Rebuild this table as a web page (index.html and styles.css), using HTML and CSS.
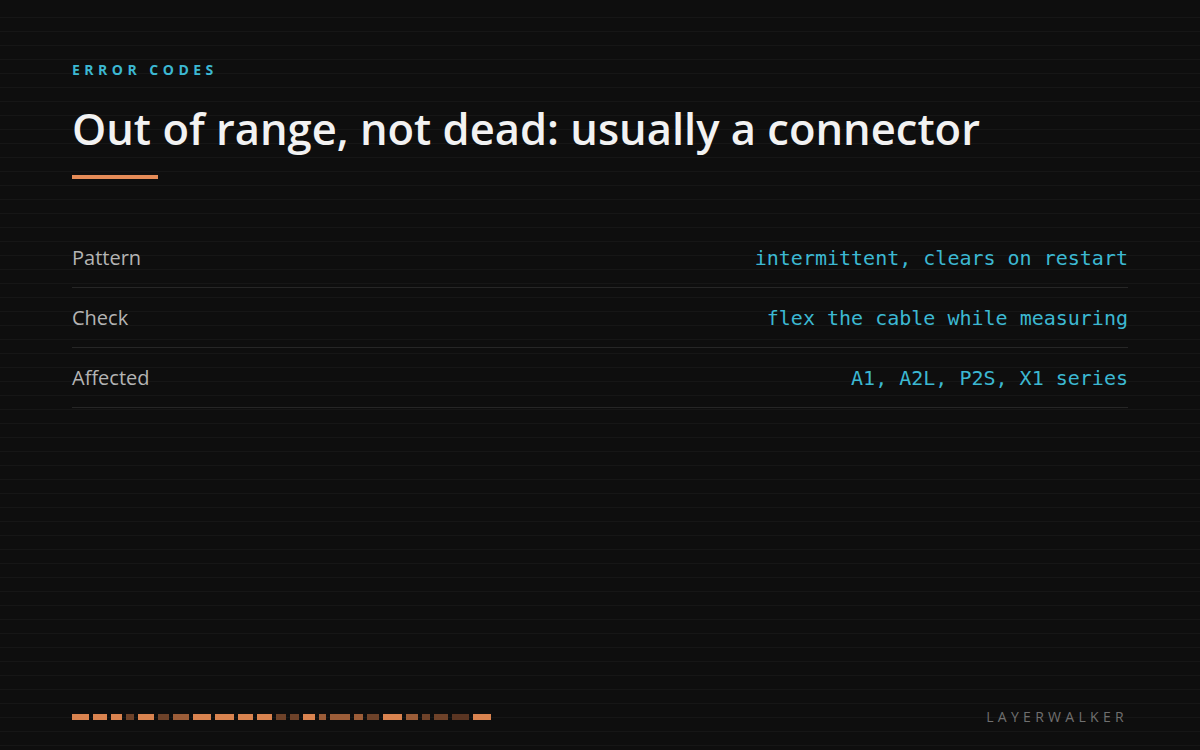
FILE: index.html
```html
<!DOCTYPE html>
<html lang="en">
<head>
<meta charset="UTF-8">
<title>Error codes</title>
<link rel="stylesheet" href="styles.css">
</head>
<body>
<div class="slide">
	<div class="top">
		<p class="eyebrow">ERROR CODES</p>
		<h1 class="title">Out of range, not dead: usually a connector</h1>
		<div class="rule"></div>
		<ul class="facts">
			<li><span class="key">Pattern</span><span class="val">intermittent, clears on restart</span></li>
			<li><span class="key">Check</span><span class="val">flex the cable while measuring</span></li>
			<li><span class="key">Affected</span><span class="val">A1, A2L, P2S, X1 series</span></li>
		</ul>
	</div>
	<div class="foot">
		<div class="dashes">
			<i style="width:17px"></i>
			<i style="width:14px"></i>
			<i style="width:11px"></i>
			<i class="dim" style="width:8px"></i>
			<i style="width:16px"></i>
			<i class="dim" style="width:11px"></i>
			<i class="mid" style="width:16px"></i>
			<i style="width:18px"></i>
			<i style="width:19px"></i>
			<i style="width:15px"></i>
			<i style="width:15px"></i>
			<i class="dim" style="width:10px"></i>
			<i class="dim" style="width:9px"></i>
			<i style="width:12px"></i>
			<i class="mid" style="width:7px"></i>
			<i class="mid" style="width:20px"></i>
			<i class="mid" style="width:9px"></i>
			<i class="dim" style="width:12px"></i>
			<i style="width:19px"></i>
			<i class="mid" style="width:12px"></i>
			<i class="dim" style="width:8px"></i>
			<i class="dim" style="width:14px"></i>
			<i class="dark" style="width:17px"></i>
			<i style="width:18px"></i>
		</div>
		<span class="brand">LAYERWALKER</span>
	</div>
</div>
</body>
</html>
```

FILE: styles.css
```css
body,
h1,
p,
ul {
	margin: 0;
	padding: 0;
}

li {
	list-style: none;
}

body {
	background: #0e0e0e;
	font-family: "Open Sans", "Noto Sans", sans-serif;
}

.slide {
	width: 1200px;
	height: 750px;
	box-sizing: border-box;
	padding: 60px 72px 24px;
	display: flex;
	flex-direction: column;
	justify-content: space-between;
	background: repeating-linear-gradient(to bottom, transparent 0, transparent 13px, rgba(255, 255, 255, 0.03) 13px, rgba(255, 255, 255, 0.03) 14px) 0 4px;
}

.eyebrow {
	font-size: 14px;
	font-weight: 700;
	letter-spacing: 4.5px;
	color: #3cb8d2;
	line-height: 20px;
}

.title {
	margin-top: 21px;
	font-size: 43.5px;
	font-weight: 600;
	line-height: 56px;
	color: #f2f2f2;
}

.rule {
	width: 86px;
	height: 4px;
	margin-top: 18px;
	background: #e58b57;
}

.facts {
	margin-top: 49px;
}

.facts li {
	display: flex;
	justify-content: space-between;
	align-items: center;
	height: 59px;
	border-bottom: 1px solid #262626;
}

.facts .key {
	font-size: 20px;
	color: #b4b4b4;
}

.facts .val {
	font-family: "DejaVu Sans Mono", "Liberation Mono", monospace;
	font-size: 20px;
	color: #3cb8d2;
}

.foot {
	display: flex;
	justify-content: space-between;
	align-items: center;
}

.dashes {
	display: flex;
	gap: 4px;
}

.dashes i {
	display: block;
	height: 6px;
	background: #d9834f;
}

.dashes .mid {
	background: #9c5d38;
}

.dashes .dim {
	background: #6e4229;
}

.dashes .dark {
	background: #5a3522;
}

.brand {
	font-size: 14px;
	letter-spacing: 4.3px;
	color: #707070;
}
```
